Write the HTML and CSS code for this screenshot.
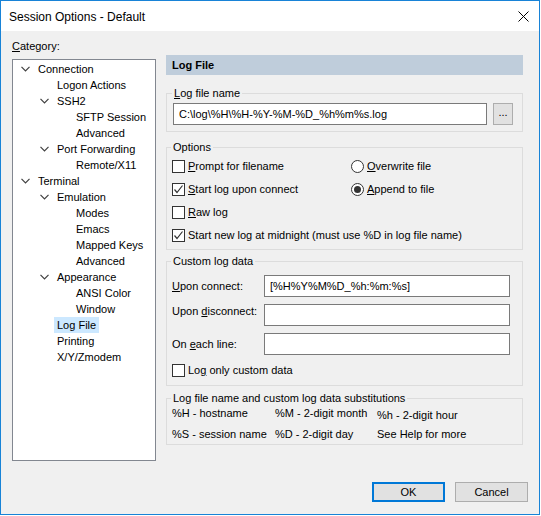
FILE: index.html
```html
<!DOCTYPE html>
<html lang="en">
<head>
    <meta charset="UTF-8">
    <title>Session Options - Default</title>
    <link rel="stylesheet" href="styles.css">
</head>
<body>
    <div class="window">
        <div class="titlebar">
            <span class="title">Session Options - Default</span>
            <svg class="close" width="11" height="11" viewBox="0 0 11 11">
                <path d="M0.5 0.5 L10.5 10.5 M10.5 0.5 L0.5 10.5" stroke="#000" stroke-width="1" fill="none"/>
            </svg>
        </div>

        <div class="dialog">
            <div class="main">
                <div class="category">
                    <div class="category-label"><u>C</u>ategory:</div>
                    <div class="tree">
                        <div class="node lvl0"><span class="exp"><svg width="9" height="6" viewBox="0 0 9 6"><polyline points="0.5,0.8 4.5,4.8 8.5,0.8"/></svg></span>Connection</div>
                        <div class="node lvl1"><span class="exp"></span>Logon Actions</div>
                        <div class="node lvl1"><span class="exp"><svg width="9" height="6" viewBox="0 0 9 6"><polyline points="0.5,0.8 4.5,4.8 8.5,0.8"/></svg></span>SSH2</div>
                        <div class="node lvl2"><span class="exp"></span>SFTP Session</div>
                        <div class="node lvl2"><span class="exp"></span>Advanced</div>
                        <div class="node lvl1"><span class="exp"><svg width="9" height="6" viewBox="0 0 9 6"><polyline points="0.5,0.8 4.5,4.8 8.5,0.8"/></svg></span>Port Forwarding</div>
                        <div class="node lvl2"><span class="exp"></span>Remote/X11</div>
                        <div class="node lvl0"><span class="exp"><svg width="9" height="6" viewBox="0 0 9 6"><polyline points="0.5,0.8 4.5,4.8 8.5,0.8"/></svg></span>Terminal</div>
                        <div class="node lvl1"><span class="exp"><svg width="9" height="6" viewBox="0 0 9 6"><polyline points="0.5,0.8 4.5,4.8 8.5,0.8"/></svg></span>Emulation</div>
                        <div class="node lvl2"><span class="exp"></span>Modes</div>
                        <div class="node lvl2"><span class="exp"></span>Emacs</div>
                        <div class="node lvl2"><span class="exp"></span>Mapped Keys</div>
                        <div class="node lvl2"><span class="exp"></span>Advanced</div>
                        <div class="node lvl1"><span class="exp"><svg width="9" height="6" viewBox="0 0 9 6"><polyline points="0.5,0.8 4.5,4.8 8.5,0.8"/></svg></span>Appearance</div>
                        <div class="node lvl2"><span class="exp"></span>ANSI Color</div>
                        <div class="node lvl2"><span class="exp"></span>Window</div>
                        <div class="node lvl1"><span class="exp"></span><span class="selected">Log File</span></div>
                        <div class="node lvl1"><span class="exp"></span>Printing</div>
                        <div class="node lvl1"><span class="exp"></span>X/Y/Zmodem</div>
                    </div>
                </div>

                <div class="panel">
                    <div class="panel-header">Log File</div>

                    <fieldset class="group group-file">
                        <legend><u>L</u>og file name</legend>
                        <div class="file-row">
                            <input class="textbox file-input" type="text" value="C:\log\%H\%H-%Y-%M-%D_%h%m%s.log">
                            <button class="browse">...</button>
                        </div>
                    </fieldset>

                    <fieldset class="group group-options">
                        <legend>Options</legend>
                        <div class="options-grid">
                            <label class="check"><span class="box"></span><span><u>P</u>rompt for filename</span></label>
                            <label class="check"><span class="radio"></span><span><u>O</u>verwrite file</span></label>
                            <label class="check"><span class="box checked"><svg width="11" height="11" viewBox="0 0 11 11"><polyline points="1.5,5.5 4,8.5 9.5,1.5"/></svg></span><span><u>S</u>tart log upon connect</span></label>
                            <label class="check"><span class="radio on"></span><span><u>A</u>ppend to file</span></label>
                            <label class="check"><span class="box"></span><span><u>R</u>aw log</span></label>
                            <span></span>
                            <label class="check wide"><span class="box checked"><svg width="11" height="11" viewBox="0 0 11 11"><polyline points="1.5,5.5 4,8.5 9.5,1.5"/></svg></span><span>Start new log at midnight (must use %D in log file name)</span></label>
                        </div>
                    </fieldset>

                    <fieldset class="group group-custom">
                        <legend>Custom log data</legend>
                        <div class="custom-grid">
                            <span class="field-label"><u>U</u>pon connect:</span>
                            <input class="textbox" type="text" value="[%H%Y%M%D_%h:%m:%s]">
                            <span class="field-label label-top">Upon <u>d</u>isconnect:</span>
                            <input class="textbox" type="text" value="">
                            <span class="field-label">On <u>e</u>ach line:</span>
                            <input class="textbox" type="text" value="">
                        </div>
                        <label class="check only-custom"><span class="box"></span><span>Lo<u>g</u> only custom data</span></label>
                    </fieldset>

                    <fieldset class="group group-subst">
                        <legend>Log file name and custom log data substitutions</legend>
                        <div class="subst-grid">
                            <span>%H - hostname</span>
                            <span>%M - 2-digit month</span>
                            <span class="low">%h - 2-digit hour</span>
                            <span>%S - session name</span>
                            <span>%D - 2-digit day</span>
                            <span>See Help for more</span>
                        </div>
                    </fieldset>
                </div>
            </div>

            <div class="buttons">
                <button class="btn btn-default">OK</button>
                <button class="btn">Cancel</button>
            </div>
        </div>
    </div>
</body>
</html>
```

FILE: styles.css
```css
:root {
    --win-blue: #1883d7;
    --face: #f0f0f0;
    --frame: #dcdcdc;
    --edit-border: #7a7a7a;
    --text: #000;
}

body {
    margin: 0;
    background: #fff;
    font-family: "Liberation Sans", Arial, sans-serif;
    font-size: 11px;
    color: var(--text);
}

.window {
    width: 538px;
    height: 513px;
    border: 1px solid var(--win-blue);
    display: flex;
    flex-direction: column;
    background: var(--face);
}

.titlebar {
    height: 30px;
    flex: none;
    background: #fff;
    display: flex;
    align-items: center;
    justify-content: space-between;
    padding: 0 10px 0 8px;
}

.title {
    font-size: 12px;
    margin-top: 1px;
}

.close {
    display: block;
}

.dialog {
    flex: 1;
    display: flex;
    flex-direction: column;
    padding: 7px 11px 12px 11px;
}

.main {
    display: flex;
    gap: 10px;
    align-items: flex-start;
}

/* category tree */
.category-label {
    line-height: 16px;
    margin-bottom: 5px;
}

.tree {
    width: 142px;
    height: 399px;
    border: 1px solid #828790;
    background: #fff;
    padding-top: 1px;
    box-sizing: content-box;
}

.node {
    height: 16px;
    line-height: 16px;
    display: flex;
    align-items: center;
    white-space: nowrap;
}

.lvl0 { padding-left: 7px; }
.lvl1 { padding-left: 26px; }
.lvl2 { padding-left: 45px; }

.exp {
    width: 18px;
    flex: none;
    display: flex;
    align-items: center;
}

.exp svg {
    margin-left: 1px;
}

.exp polyline {
    fill: none;
    stroke: #404040;
    stroke-width: 1.2;
}

.selected {
    background: #cce8ff;
    margin-left: -3px;
    padding: 0 3px;
}

/* right panel */
.panel {
    width: 357px;
    flex: none;
    margin-top: 17px;
}

.panel-header {
    height: 20px;
    line-height: 20px;
    background: #bfcddb;
    font-weight: bold;
    padding-left: 6px;
}

.group {
    border: 1px solid var(--frame);
    margin: 0;
    min-width: 0;
    padding: 0 8px 0 6px;
}

.group legend {
    line-height: 16px;
    padding: 0 2px;
    margin-left: -1px;
}

.group-file {
    margin-top: 10px;
    padding-top: 2px;
    padding-bottom: 6px;
}

.file-row {
    display: flex;
    align-items: center;
    gap: 6px;
}

.textbox {
    height: 22px;
    box-sizing: border-box;
    border: 1px solid var(--edit-border);
    background: #fff;
    font-family: inherit;
    font-size: 11px;
    padding: 0 5px;
    margin: 0;
    color: #000;
}

.file-input {
    width: 314px;
}

.browse {
    width: 20px;
    height: 22px;
    margin-top: -1px;
    border: 1px solid #adadad;
    background: #e1e1e1;
    font-family: inherit;
    font-size: 11px;
    padding: 0 0 4px;
}

.group-options {
    margin-top: 7px;
    padding-bottom: 3px;
    padding-left: 5px;
}

.options-grid {
    display: grid;
    grid-template-columns: 179px 1fr;
    grid-auto-rows: 22px;
    row-gap: 1px;
}

.wide {
    grid-column: 1 / 3;
}

.check {
    display: flex;
    align-items: center;
    white-space: nowrap;
}

.box {
    width: 11px;
    height: 11px;
    border: 1px solid #333;
    background: #fff;
    margin-right: 3px;
    flex: none;
    display: flex;
}

.box polyline {
    fill: none;
    stroke: #333;
    stroke-width: 1.2;
}

.radio {
    width: 11px;
    height: 11px;
    border: 1px solid #333;
    border-radius: 50%;
    background: #fff;
    margin-right: 3px;
    flex: none;
    position: relative;
}

.radio.on::after {
    content: "";
    position: absolute;
    left: 2px;
    top: 2px;
    width: 7px;
    height: 7px;
    border-radius: 50%;
    background: #333;
}

.group-custom {
    margin-top: 3px;
    padding-top: 6px;
    padding-bottom: 4px;
    padding-left: 5px;
}

.custom-grid {
    display: grid;
    grid-template-columns: 92px 246px;
    grid-auto-rows: 22px;
    row-gap: 7px;
    align-items: center;
}

.label-top {
    align-self: start;
    padding-top: 1px;
}

.only-custom {
    height: 22px;
    margin-top: 4px;
}

.group-subst {
    margin-top: 4px;
    padding-bottom: 3px;
    padding-left: 5px;
}

.subst-grid {
    display: grid;
    grid-template-columns: 103px 102px 1fr;
    grid-auto-rows: 14px;
    row-gap: 7px;
    line-height: 14px;
    white-space: nowrap;
}

.low {
    padding-top: 2px;
}

/* bottom buttons */
.buttons {
    margin-top: auto;
    display: flex;
    justify-content: flex-end;
    gap: 10px;
}

.btn {
    width: 73px;
    height: 20px;
    border: 1px solid #adadad;
    background: #e1e1e1;
    font-family: inherit;
    font-size: 11px;
    color: #000;
    padding: 0;
}

.btn-default {
    border-color: #0078d7;
    box-shadow: inset 0 0 0 1px #0078d7;
}
```
